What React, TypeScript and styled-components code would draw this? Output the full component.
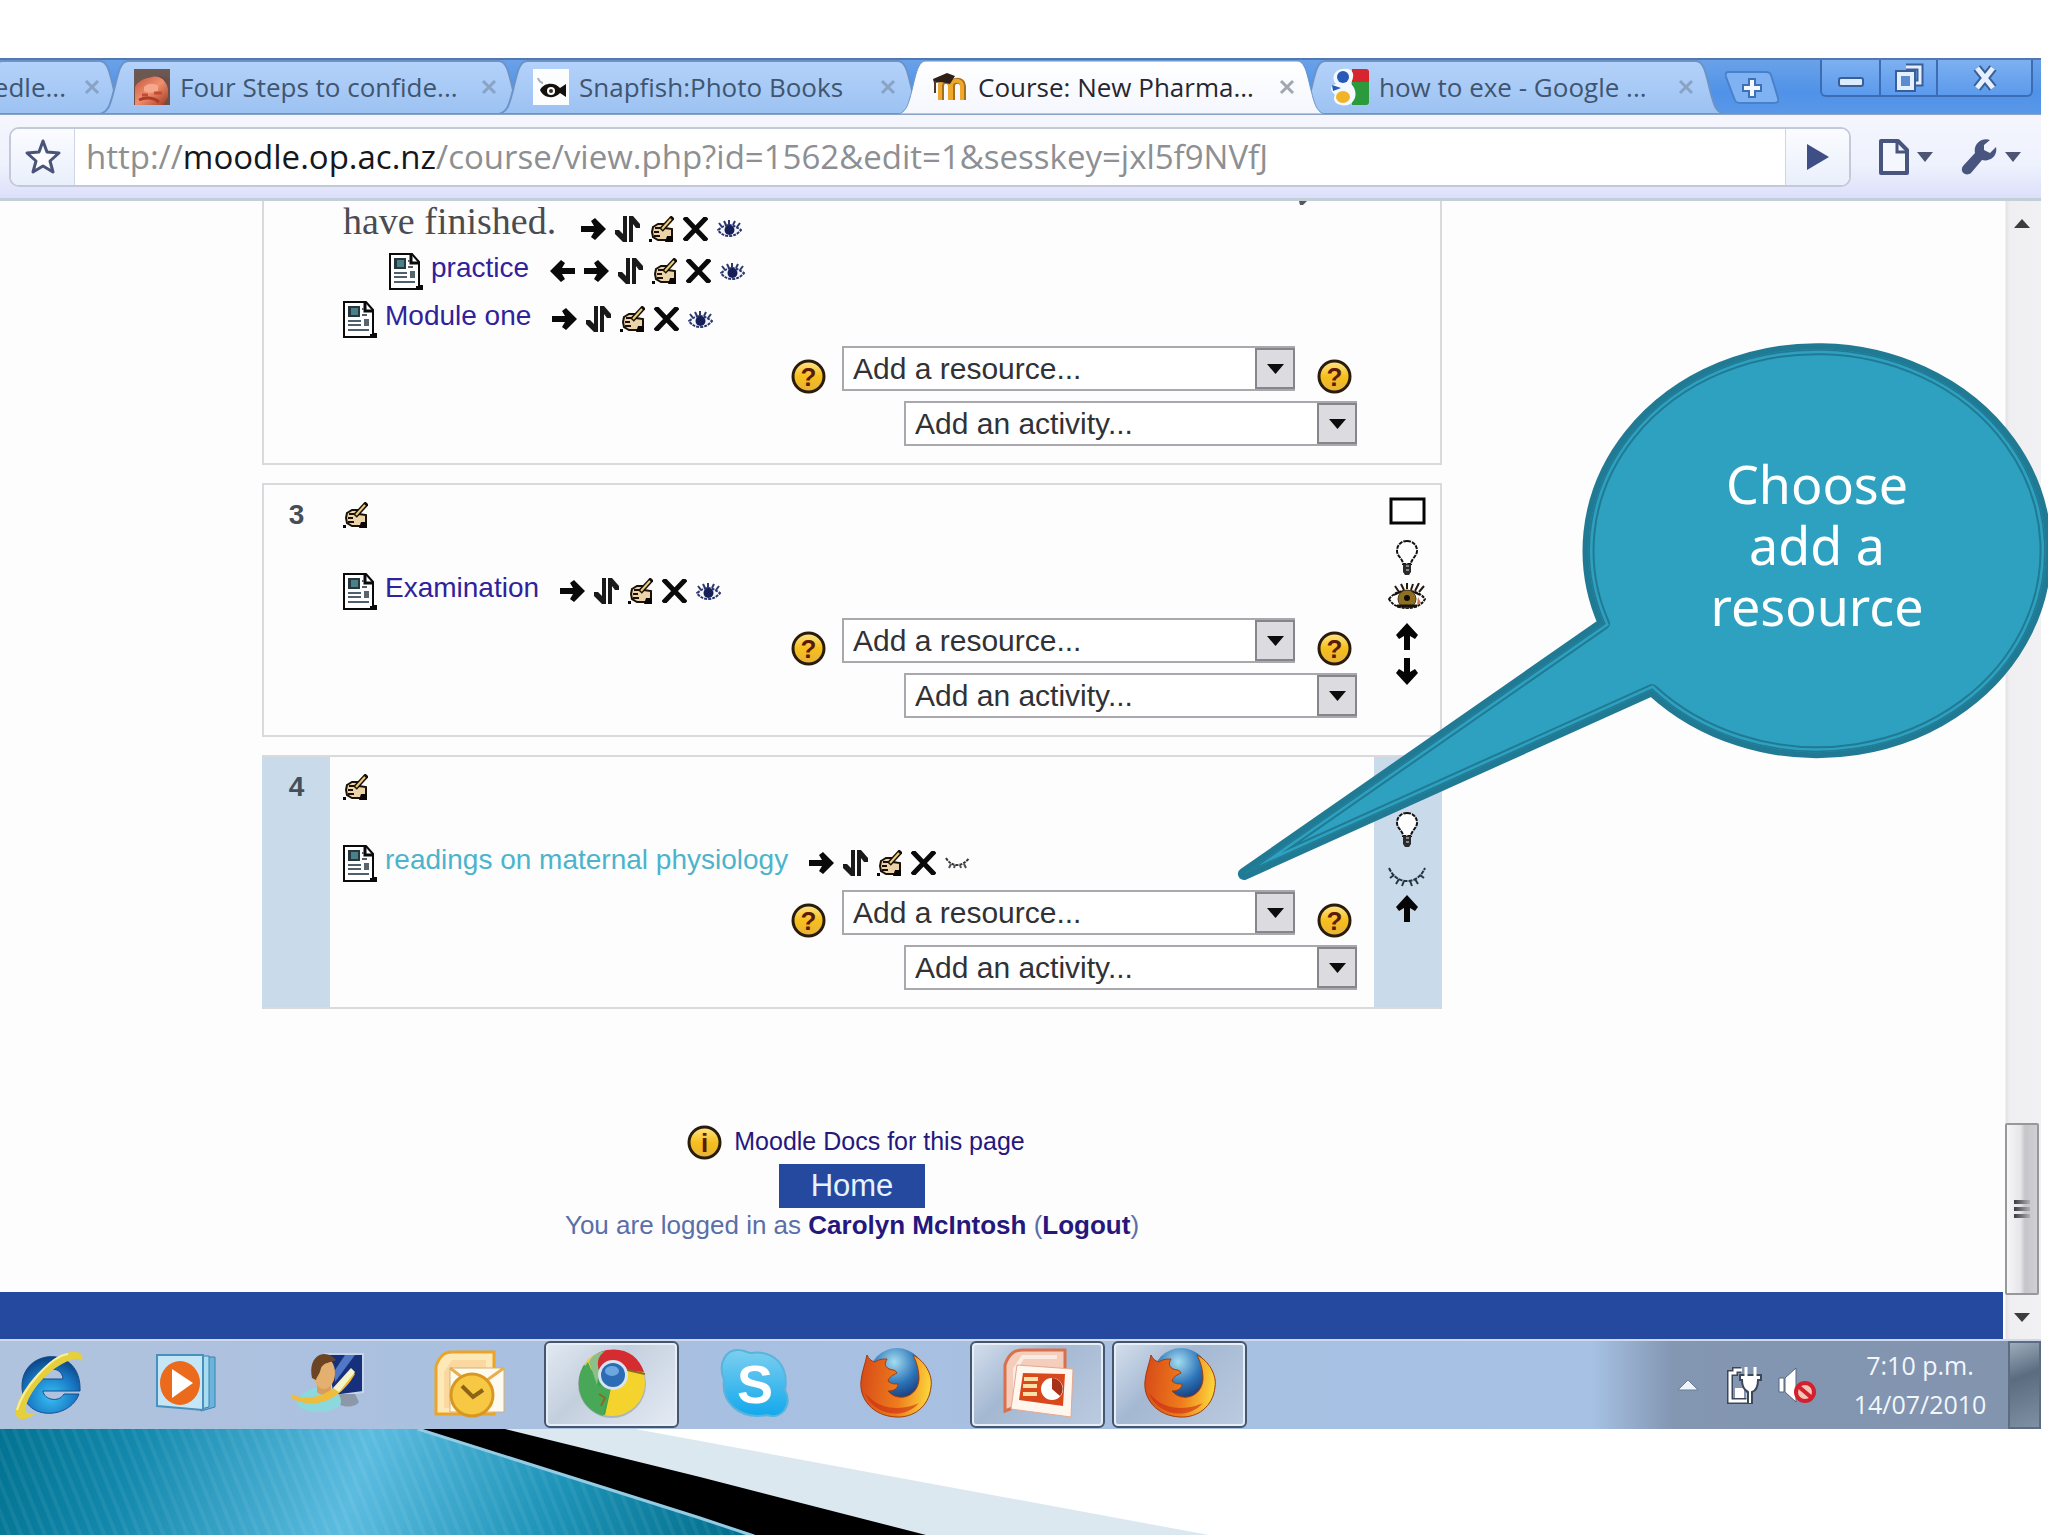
import React from "react";
import styled, { createGlobalStyle, css } from "styled-components";

const sans = `"Liberation Sans", Arial, sans-serif`;
const ui = `"Open Sans", "Noto Sans", sans-serif`;

const GlobalStyle = createGlobalStyle`
  *, *::before, *::after { box-sizing: border-box; }
  body { margin: 0; background: #fff; font-family: ${sans}; }
  button { margin: 0; padding: 0; border: 0; background: none; font: inherit; color: inherit; cursor: pointer; }
  a { text-decoration: none; }
  svg { display: block; flex: none; }
`;

/* ---------- course icons ---------- */

const EditIcon = () => (
  <svg width="25" height="26" viewBox="0 0 25 26" aria-hidden>
    <path d="M4 11l5-3h6l1 4 7 1v11H9l-5-3-1-5z" fill="#ecd4a8" stroke="#1a120a" strokeWidth="2" />
    <path d="M6 12h5M5 16h5M5 20h6" stroke="#1a120a" strokeWidth="2" />
    <path d="M18 20h6v6h-8z" fill="#0a0806" />
    <path d="M0 23h3v3H0z" fill="#0a0806" />
    <path d="M24 1L12 14" stroke="#140e08" strokeWidth="5" />
    <path d="M22 3l-9 10" stroke="#f0cc78" strokeWidth="2" />
  </svg>
);
const EyeIcon = () => (
  <svg width="25" height="17" viewBox="0 0 25 17" aria-hidden>
    <path d="M1 10Q7 5 12 5t12 5q-5 6-12 6T1 10z" fill="#f4f6fc" stroke="#2a3770" strokeWidth="2" strokeDasharray="3 1" />
    <circle cx="12.500" cy="10" r="5" fill="#141f58" />
    <path d="M12 0v5M7 1l2 4M18 1l-2 4M2 3l3 4M23 3l-3 4" stroke="#2a3770" strokeWidth="2" />
  </svg>
);
const EyeShutIcon = () => (
  <svg width="25" height="12" viewBox="0 0 25 12" aria-hidden>
    <path d="M1 1q4 7 11 7T24 1" fill="none" stroke="#33363a" strokeWidth="2" strokeDasharray="3 1" />
    <path d="M6 7l-2 4M10 8l-1 3M15 8l1 3M19 7l2 4" stroke="#4c5054" strokeWidth="2" />
  </svg>
);
const BigEyeIcon = () => (
  <svg width="38" height="26" viewBox="0 0 38 26" aria-hidden>
    <path d="M1 16q6-8 18-8t18 8q-5 9-18 9T1 16z" fill="#fff" stroke="#17120c" strokeWidth="2" strokeDasharray="3 1" />
    <path d="M6 12Q19 4 32 12" fill="none" stroke="#17120c" strokeWidth="2" />
    <circle cx="19" cy="16" r="9" fill="#8f6f22" stroke="#4e3a10" strokeWidth="1" />
    <circle cx="19" cy="15" r="3" fill="#120c04" />
    <path d="M9 23h20" stroke="#17120c" strokeWidth="3" />
    <path d="M30 14l3 6-4 2z" fill="#c47a5c" />
    <path d="M7 3l4 6M13 1l3 6M19 0v6M25 1l-2 6M31 0l-4 8M36 3l-5 6" stroke="#221a12" strokeWidth="2" />
  </svg>
);
const BigEyeShutIcon = () => (
  <svg width="38" height="20" viewBox="0 0 38 20" aria-hidden>
    <path d="M1 1q6 13 18 13T37 1" fill="none" stroke="#26343f" strokeWidth="2" strokeDasharray="4 1" />
    <path d="M6 8l-4 3M11 12l-3 5M16 14l-2 5M22 14l2 5M27 12l3 5M32 8l4 3" stroke="#26343f" strokeWidth="2" />
  </svg>
);
const BulbIcon = () => (
  <svg width="24" height="35" viewBox="0 0 24 35" aria-hidden>
    <path d="M12 1c6 0 10 4 10 10 0 5-6 8-6 13H8c0-5-6-8-6-13C2 5 6 1 12 1z" fill="#fff" stroke="#111" strokeWidth="2" strokeDasharray="4 1" />
    <path d="M8 24h8v8l-2 3h-4l-2-3z" fill="#2a2a2c" />
    <path d="M11 26h3M11 30h3" stroke="#e8e8e8" strokeWidth="1" />
  </svg>
);

const RightIcon = () => (
  <svg width="25" height="22" viewBox="0 0 25 22" aria-hidden>
    <path d="M0 8h13L10 3l4-3 11 11-11 11-4-3 3-5H0z" fill="#0a0a0a" />
  </svg>
);
const LeftIcon = () => (
  <svg width="25" height="22" viewBox="0 0 25 22" aria-hidden>
    <path d="M25 8H12l3-5-4-3L0 11l11 11 4-3-3-5h13z" fill="#0a0a0a" />
  </svg>
);
const MoveIcon = () => (
  <svg width="25" height="26" viewBox="0 0 25 26" aria-hidden>
    <path d="M8 0h4v26H8l-8-8v-4h4l4 4zM14 0h4l7 8v4h-4l-3-4v18h-4z" fill="#1a1a1a" />
  </svg>
);
const DeleteIcon = () => (
  <svg width="25" height="24" viewBox="0 0 25 24" aria-hidden>
    <path d="M3 2l19 20M22 2L3 22" stroke="#0a0a0a" strokeWidth="5" strokeLinecap="square" />
  </svg>
);
const UpIcon = () => (
  <svg width="22" height="27" viewBox="0 0 22 27" aria-hidden>
    <path d="M8 27V13l-5 3-3-4L11 0l11 12-3 4-5-3v14z" fill="#050505" />
  </svg>
);
const DownIcon = () => (
  <svg width="22" height="27" viewBox="0 0 22 27" aria-hidden>
    <path d="M8 0v14l-5-3-3 4 11 12 11-12-3-4-5 3V0z" fill="#050505" />
  </svg>
);
const SquareIcon = () => (
  <svg width="37" height="28" viewBox="0 0 37 28" aria-hidden>
    <rect x="2" y="2" width="33" height="24" fill="#fff" stroke="#050505" strokeWidth="3" />
  </svg>
);
const DocIcon = () => (
  <svg width="34" height="37" viewBox="0 0 34 37" aria-hidden>
    <path d="M1 1h22l7 8v24h3v3H1z" fill="#fff" stroke="#0a0a0a" strokeWidth="2" />
    <path d="M22 1v9h8" fill="none" stroke="#0a0a0a" strokeWidth="3" />
    <rect x="5" y="5" width="12" height="11" fill="#26383f" />
    <rect x="8" y="7" width="7" height="7" fill="#4c7f88" />
    <path d="M19 8h2M19 14h5M5 20h13M5 24h13M5 29h21" stroke="#50606a" strokeWidth="2" />
    <rect x="21" y="18" width="5" height="7" fill="#56666e" />
    <path d="M27 35h7" stroke="#0a0a0a" strokeWidth="4" />
  </svg>
);
const CoinIcon = ({ mark }: { mark: string }) => (
  <svg width="35" height="35" viewBox="0 0 35 35" aria-hidden>
    <defs>
      <linearGradient id="coin" x1="0" y1="0" x2="0" y2="1">
        <stop offset="0" stopColor="#ffe58a" />
        <stop offset=".5" stopColor="#f6bf1c" />
        <stop offset="1" stopColor="#e6b03a" />
      </linearGradient>
    </defs>
    <circle cx="17.5" cy="17.5" r="15.5" fill="url(#coin)" stroke="#2a1c0c" strokeWidth="3" />
    <text x="17.5" y="27" textAnchor="middle" fontFamily="Liberation Sans, sans-serif" fontWeight="700" fontSize="26" fill="#5c1a0c">
      {mark}
    </text>
  </svg>
);

/* ---------- favicons ---------- */

const FaceFavicon = () => (
  <svg width="36" height="36" viewBox="0 0 36 36" aria-hidden>
    <defs>
      <linearGradient id="face" x1="0" y1="0" x2="1" y2="1">
        <stop offset="0" stopColor="#c4553e" />
        <stop offset=".5" stopColor="#f09070" />
        <stop offset="1" stopColor="#a03820" />
      </linearGradient>
    </defs>
    <rect width="36" height="36" fill="#6c5048" />
    <path d="M1 36V18C5 8 12 10 18 8s14 2 16 12v8l-5 8z" fill="url(#face)" />
    <path d="M0 0h36v10C26 4 10 6 0 18z" fill="#6c5850" />
    <path d="M10 18c4-4 10-4 14-1v5c-5 2-10 2-14 0z" fill="#f6a88c" />
    <path d="M8 26h6M20 24h8" stroke="#c24c30" strokeWidth="3" />
    <path d="M5 31c6-3 14-3 20 2" stroke="#b03c28" strokeWidth="3" fill="none" />
  </svg>
);
const FishFavicon = () => (
  <svg width="36" height="36" viewBox="0 0 36 36" aria-hidden>
    <rect width="36" height="36" fill="#fbfdff" />
    <path d="M5 9q1 4 5 5" stroke="#a8b0b8" strokeWidth="2" fill="none" />
    <path d="M7 21c4-8 15-8 20-2l6-4v13l-6-4c-5 6-16 6-20-3z" fill="#14100e" />
    <circle cx="18" cy="22" r="4" fill="#fff" />
    <circle cx="18" cy="22" r="2" fill="#3a3028" />
  </svg>
);
const MoodleFavicon = () => (
  <svg width="36" height="36" viewBox="0 0 36 36" aria-hidden>
    <g fill="none" strokeWidth="6">
      <path d="M9 31V17c0-7 10-7 10 0v14M20 31V17c0-7 11-7 11 0v14" stroke="#a5701a" />
      <path d="M8 31V17c0-7 10-7 10 0v14M19 31V17c0-7 11-7 11 0v14" stroke="#f0a82c" strokeWidth="4" />
    </g>
    <path d="M1 10l14-6 8 3-5 8-9-2-7 1z" fill="#2e2018" />
    <path d="M3 12v12" stroke="#4a3a2c" strokeWidth="2" />
  </svg>
);
const GoogleFavicon = () => (
  <svg width="38" height="38" viewBox="0 0 38 38" aria-hidden>
    <path d="M21 1h14a3 3 0 013 3v11H21z" fill="#d8242c" />
    <path d="M21 14h17v20a3 3 0 01-3 3H21z" fill="#2a9a3c" />
    <path d="M6 3C12-1 24 0 22 9c0 4-3 5-2 7 6 5 7 17-3 21C8 39 0 34 4 27c-6-6-5-9 1-11C1 12 2 6 6 3z" fill="#f4f8ff" />
    <ellipse cx="12" cy="9" rx="6" ry="6" fill="#2858b8" />
    <ellipse cx="12" cy="29" rx="7" ry="6" fill="#f0b428" />
    <path d="M1 17l9 3-8 3z" fill="#2858b8" />
  </svg>
);

/* ---------- browser window ---------- */

const Slide = styled.div`
  position: relative;
  display: flex;
  flex-direction: column;
  min-height: 100vh;
  padding-top: 58px;
  overflow: hidden;
  background: #fff;
`;

const Window = styled.div`
  display: flex;
  flex-direction: column;
  margin-right: 7px;
`;

const TitleBar = styled.header`
  display: flex;
  align-items: flex-start;
  justify-content: space-between;
  height: 56px;
  overflow: hidden;
  background: linear-gradient(#6aa2e8, #4f92e8 60%, #5a98e8);
  border-top: 2px solid #5078b4;
`;

const TabStrip = styled.nav`
  display: flex;
  align-items: flex-start;
  height: 54px;
  margin-left: -26px;
`;

const TabBox = styled.div<{ $active?: boolean; $cut?: boolean }>`
  position: relative;
  z-index: ${(p) => (p.$active ? 2 : 1)};
  display: flex;
  align-items: center;
  justify-content: ${(p) => (p.$cut ? "flex-end" : "flex-start")};
  gap: 10px;
  width: ${(p) => (p.$cut ? 154 : 427)}px;
  height: 54px;
  padding: 0 28px 0 34px;
  margin-right: -28px;
  flex: none;
`;

const TabShape = styled.svg`
  position: absolute;
  inset: 0;
  width: 100%;
  height: 100%;
  z-index: -1;
`;

const TabTitle = styled.a<{ $active?: boolean; $cut?: boolean }>`
  flex: ${(p) => (p.$cut ? "none" : "1")};
  font: 26px/36px ${ui};
  white-space: nowrap;
  color: ${(p) => (p.$active ? "#26282e" : "#40556f")};
`;

const TabClose = styled.button`
  width: 20px;
  height: 20px;
  margin-left: 8px;
  display: grid;
  place-items: center;
`;

function Tab({ title, icon, active, cut }: { title: string; icon?: React.ReactNode; active?: boolean; cut?: boolean }) {
  const w = cut ? 154 : 427;
  return (
    <TabBox $active={active} $cut={cut}>
      <TabShape viewBox={`0 0 ${w} 54`} aria-hidden>
        <defs>
          <linearGradient id="tabIdle" x1="0" y1="0" x2="0" y2="1">
            <stop offset="0" stopColor="#b4d2fa" />
            <stop offset="1" stopColor="#9cc2f2" />
          </linearGradient>
          <linearGradient id="tabActive" x1="0" y1="0" x2="0" y2="1">
            <stop offset="0" stopColor="#ffffff" />
            <stop offset="1" stopColor="#f5f7fe" />
          </linearGradient>
        </defs>
        <path
          d={`M0 54C8 52 10 46 14 30S20 1 28 1H${w - 28}C${w - 20} 1 ${w - 18} 14 ${w - 14} 30S${w - 8} 52 ${w} 54z`}
          fill={active ? "url(#tabActive)" : "url(#tabIdle)"}
          stroke="#6b93c8"
          strokeWidth={active ? 1 : 2}
        />
      </TabShape>
      {icon}
      <TabTitle href="#" $active={active} $cut={cut}>
        {title}
      </TabTitle>
      <TabClose aria-label="Close tab">
        <svg width="16" height="16" viewBox="0 0 16 16" aria-hidden>
          <path d="M2 2l12 12M14 2L2 14" stroke={active ? "#a2a6ae" : "#8aa2c4"} strokeWidth="3" />
        </svg>
      </TabClose>
    </TabBox>
  );
}

const NewTab = styled.button`
  margin: 11px 0 0 29px;
`;

const WindowButtons = styled.div`
  display: flex;
  height: 37px;
  margin-right: 8px;
  border: 2px solid #3c6cb4;
  border-top: 0;
  border-radius: 0 0 6px 6px;
  background: linear-gradient(#7db0f0, #5b9aec);
`;

const WindowButton = styled.button<{ $wide?: boolean }>`
  display: grid;
  place-items: center;
  width: ${(p) => (p.$wide ? 95 : 57)}px;
  & + & {
    border-left: 2px solid #3c6cb4;
  }
`;

const Toolbar = styled.div`
  display: flex;
  align-items: center;
  height: 87px;
  padding: 0 20px 0 9px;
  background: linear-gradient(#f5f6fd, #eef2fd 60%, #dcdffa);
  border-top: 1px solid #8aa4c8;
  border-bottom: 3px solid #c2ced8;
`;

const AddressBar = styled.form`
  display: flex;
  flex: 1;
  height: 60px;
  border: 2px solid #c3c9d8;
  border-radius: 10px;
  background: #fff;
  overflow: hidden;
`;

const AddressButton = styled.button<{ $side: "left" | "right" }>`
  display: grid;
  place-items: center;
  width: 64px;
  background: linear-gradient(#fbfcff, #e9effb);
  ${(p) =>
    p.$side === "left"
      ? css`
          border-right: 1px solid #ced6e4;
        `
      : css`
          border-left: 1px solid #ced6e4;
        `}
`;

const AddressText = styled.a`
  flex: 1;
  padding: 0 11px;
  font: 33px/56px ${ui};
  color: #8d8f92;
  white-space: nowrap;
  overflow: hidden;
  strong {
    font-weight: 400;
    color: #15171a;
  }
`;

const ToolButton = styled.button`
  display: flex;
  align-items: center;
  gap: 8px;
  margin-left: 28px;
`;

const Caret = () => (
  <svg width="16" height="10" viewBox="0 0 16 10" aria-hidden>
    <path d="M0 0h16L8 10z" fill="#4c5672" />
  </svg>
);

/* ---------- page ---------- */

const Viewport = styled.div`
  display: flex;
  background: #fdfdfe;
`;

const Page = styled.main`
  flex: 1;
  min-width: 0;
  display: flex;
  flex-direction: column;
`;

const Column = styled.div`
  width: 100%;
  max-width: 1442px;
  padding-left: 262px;
  display: flex;
  flex-direction: column;
  gap: 18px;
`;

const Topic = styled.section<{ $current?: boolean; $open?: boolean }>`
  display: grid;
  grid-template-columns: 66px 1fr 66px;
  border: 2px solid #d9d9de;
  ${(p) =>
    p.$open &&
    css`
      border-top: 0;
    `}
  ${(p) =>
    p.$current &&
    css`
      border-left-color: #c9daea;
      border-right-color: #c9daea;
    `}
`;

const TopicSide = styled.div<{ $current?: boolean }>`
  display: flex;
  flex-direction: column;
  align-items: center;
  gap: 8px;
  padding-top: 12px;
  background: ${(p) => (p.$current ? "#c9daea" : "transparent")};
`;

const TopicNumber = styled.h2`
  margin: 0;
  padding-right: 1px;
  font: 700 28px/36px ${sans};
  color: #454f58;
`;

const SideSlot = styled.button<{ $h: number; $end?: boolean }>`
  display: flex;
  align-items: ${(p) => (p.$end ? "flex-end" : "flex-start")};
  height: ${(p) => p.$h}px;
`;

const TopicBody = styled.div<{ $open?: boolean }>`
  padding: ${(p) => (p.$open ? 0 : 16)}px 17px 17px 13px;
`;

const TopicEdit = styled.button`
  display: block;
  height: 27px;
  margin-bottom: 44px;
`;

const CutLine = styled.div`
  display: flex;
  justify-content: flex-end;
  height: 4px;
  padding-right: 50px;
`;

const Rows = styled.ul`
  display: flex;
  flex-direction: column;
  gap: 10px;
  margin: 0 0 8px;
  padding: 0;
  list-style: none;
`;

const Row = styled.li<{ $indent?: boolean }>`
  display: flex;
  align-items: center;
  height: 38px;
  padding-left: ${(p) => (p.$indent ? 46 : 0)}px;
`;

const LeadRow = styled.div`
  display: flex;
  align-items: center;
  height: 47px;
`;

const LeadText = styled.p`
  align-self: flex-start;
  margin: 0 4px 0 0;
  font: 38px/32px "Liberation Serif", serif;
  color: #4a4c50;
`;

const RowLink = styled.a<{ $dim?: boolean }>`
  align-self: flex-start;
  margin-left: 8px;
  font: 28px/32px ${sans};
  white-space: nowrap;
  color: ${(p) => (p.$dim ? "#4bb4cc" : "#2f229a")};
`;

const Actions = styled.span`
  display: flex;
  align-items: center;
  gap: 9px;
  margin-left: 21px;
`;

const icons = {
  left: ["Move left", <LeftIcon key="l" />],
  right: ["Move right", <RightIcon key="r" />],
  move: ["Move", <MoveIcon key="m" />],
  edit: ["Update", <EditIcon key="e" />],
  remove: ["Delete", <DeleteIcon key="d" />],
  hide: ["Hide", <EyeIcon key="h" />],
  show: ["Show", <EyeShutIcon key="s" />],
} as const;

function ActionBar({ items }: { items: (keyof typeof icons)[] }) {
  return (
    <Actions>
      {items.map((name) => (
        <button key={name} aria-label={icons[name][0]}>
          {icons[name][1]}
        </button>
      ))}
    </Actions>
  );
}

const AddForm = styled.form`
  display: flex;
  flex-direction: column;
  align-items: flex-end;
  gap: 10px;
`;

const AddLine = styled.div`
  display: flex;
  align-items: flex-end;
  gap: 16px;
`;

const HelpButton = styled.button<{ $last?: boolean }>`
  height: 35px;
  margin: 0 ${(p) => (p.$last ? 5 : 0)}px -3px ${(p) => (p.$last ? 6 : 0)}px;
`;

const SelectBox = styled.div`
  position: relative;
  width: 453px;
  height: 45px;
`;

const Select = styled.select`
  appearance: none;
  width: 100%;
  height: 100%;
  padding: 0 44px 0 9px;
  border: 2px solid #a8a8ae;
  border-radius: 0;
  background: #fff;
  font: 30px/36px ${sans};
  color: #303236;
`;

const SelectArrow = styled.span`
  position: absolute;
  top: 2px;
  right: 0;
  bottom: 2px;
  width: 40px;
  display: grid;
  place-items: center;
  border: 2px solid #85858b;
  background: #dcdce0;
  pointer-events: none;
`;

function Dropdown({ label }: { label: string }) {
  return (
    <SelectBox>
      <Select aria-label={label}>
        <option>{label}</option>
      </Select>
      <SelectArrow>
        <svg width="17" height="10" viewBox="0 0 17 10" aria-hidden>
          <path d="M0 0h17L8.500 10z" fill="#0c0c0c" />
        </svg>
      </SelectArrow>
    </SelectBox>
  );
}

function AddControls() {
  return (
    <AddForm>
      <AddLine>
        <HelpButton type="button" aria-label="Help with resources">
          <CoinIcon mark="?" />
        </HelpButton>
        <Dropdown label="Add a resource..." />
        <HelpButton type="button" $last aria-label="Help with activities">
          <CoinIcon mark="?" />
        </HelpButton>
      </AddLine>
      <Dropdown label="Add an activity..." />
    </AddForm>
  );
}

const PageFooter = styled.footer`
  display: flex;
  flex-direction: column;
  align-items: center;
  padding: 98px 0 50px;
  font: 26px/34px ${sans};
  color: #5a6ea8;
  a {
    color: #26177c;
  }
`;

const DocsLink = styled.a`
  display: flex;
  align-items: flex-start;
  gap: 12px;
  padding-left: 8px;
  height: 39px;
  font-size: 25px;
  line-height: 32px;
`;

const HomeButton = styled.a`
  padding: 0 32px;
  background: #24499f;
  font-size: 31px;
  line-height: 44px;
  && {
    color: #e8f2ff;
  }
`;

const LoginLine = styled.p`
  margin: 0;
  a {
    font-weight: 700;
  }
`;

const BlueBar = styled.div`
  height: 47px;
  background: #24499f;
`;

const ScrollBar = styled.div`
  display: flex;
  flex-direction: column;
  align-items: center;
  width: 38px;
  background: linear-gradient(90deg, #fdfdfe 2px, #e4e2e6 3px, #efeef0 7px, #f1f0f2);
`;

const ScrollButton = styled.button`
  width: 34px;
  height: 44px;
  display: grid;
  place-items: center;
`;

const ScrollThumb = styled.button`
  display: flex;
  flex-direction: column;
  align-items: center;
  justify-content: center;
  gap: 3px;
  width: 34px;
  height: 172px;
  margin-top: auto;
  border: 2px solid #98989c;
  border-radius: 2px;
  background: linear-gradient(90deg, #f6f6f7, #e6e5e8 45%, #c6c5ca 60%, #d0cfd4);
`;

const Grip = styled.span`
  width: 16px;
  height: 4px;
  background: linear-gradient(90deg, #3c3c40, #b0b0b4);
`;

/* ---------- taskbar ---------- */

const TaskBar = styled.footer`
  display: flex;
  align-items: stretch;
  justify-content: space-between;
  height: 90px;
  overflow: hidden;
  border-top: 2px solid #d0dae8;
  background: linear-gradient(90deg, #b0c3de, #a8bfe0 30%, #a6c1e4 78%, #8396b2 82%, #8294ae);
`;

const TaskList = styled.div`
  display: flex;
  gap: 7px;
  margin-left: -24px;
`;

const Task = styled.button<{ $open?: boolean; $front?: boolean }>`
  display: grid;
  place-items: center;
  width: 135px;
  height: 87px;
  flex: none;
  padding-bottom: 4px;
  ${(p) =>
    p.$open &&
    css`
      border: 2px solid #46566e;
      border-radius: 6px;
      box-shadow: inset 0 0 0 2px #e6eef8;
      background: ${p.$front
        ? "linear-gradient(135deg, #e2e9f1, #c4cfde 40%, #e4ebf4)"
        : "linear-gradient(135deg, #d4dfed, #a4b8d2 40%, #bccbe0)"};
    `}
`;

const Tray = styled.div`
  display: flex;
  align-items: center;
`;

const TrayButton = styled.button`
  margin-right: 16px;
`;

const Clock = styled.time`
  width: 176px;
  font: 25px/39px ${ui};
  text-align: center;
  color: #f2f7fd;
  white-space: pre-line;
`;

const ShowDesktop = styled.button`
  align-self: stretch;
  width: 33px;
  border: 2px solid #5c6c82;
  background: linear-gradient(160deg, #9cacbc, #5b6c80 40%, #8090a4);
`;

const IEIcon = () => (
  <svg width="84" height="74" viewBox="0 0 84 74" aria-hidden>
    <defs>
      <radialGradient id="ie" cx=".5" cy=".7" r=".7">
        <stop offset="0" stopColor="#38c0f4" />
        <stop offset=".6" stopColor="#1878c4" />
        <stop offset="1" stopColor="#0c4080" />
      </radialGradient>
    </defs>
    <path d="M78 45H41c1 9 16 12 21 3h15C68 74 20 76 20 40 20 2 80 -2 78 45zM41 33h20c-1-13-19-13-20 0z" fill="url(#ie)" stroke="#14508c" strokeWidth="1" />
    <path d="M80 16C84 2 64 2 46 18 22 38 8 66 16 72c4 3 12 0 18-5-8 2-12 0-10-7 4-14 18-32 36-42 10-5 18-7 20-2z" fill="#e6cf3c" />
    <path d="M66 8C50 10 22 40 15 64" stroke="#f8efa0" strokeWidth="2" fill="none" />
  </svg>
);
const MediaIcon = () => (
  <svg width="62" height="60" viewBox="0 0 62 60" aria-hidden>
    <path d="M20 4h40v50l-14 4z" fill="#6cb4dc" stroke="#3c80b0" />
    <path d="M12 3h42v51l-12 3z" fill="#a8dcf0" stroke="#3c80b0" />
    <path d="M2 2h46v55L2 53z" fill="#c4e6f6" stroke="#4a90bc" strokeWidth="2" />
    <ellipse cx="25" cy="30" rx="20" ry="22" fill="#ec6a1c" />
    <path d="M17 16l21 14-21 15z" fill="#fff" />
  </svg>
);
const PersonIcon = () => (
  <svg width="78" height="62" viewBox="0 0 78 62" aria-hidden>
    <path d="M36 2h38v38l-30 4z" fill="#16307c" stroke="#c8d4e8" strokeWidth="2" />
    <path d="M56 3h10L46 30V18z" fill="#5078c4" />
    <path d="M50 42h16l4 8c-4 6-18 6-22 0z" fill="#8c98a8" />
    <path d="M8 52c2-20 44-24 44-2 0 12-38 14-44 2z" fill="#8cd8dc" />
    <path d="M28 30h14v10c-4 4-10 4-14 0z" fill="#d89c5c" />
    <ellipse cx="35" cy="21" rx="11" ry="16" fill="#e4b070" />
    <path d="M23 26C18 2 38-4 47 8c-6 3-12 2-15 8-1 6-4 8-5 12z" fill="#6c4424" />
    <path d="M2 42c16 8 40 4 60-24l4 4C50 50 24 58 2 46z" fill="#f0bc3c" />
    <path d="M44 36l18-20 4 4-16 20z" fill="#f4f4c8" />
  </svg>
);
const OutlookIcon = () => (
  <svg width="76" height="70" viewBox="0 0 76 70" aria-hidden>
    <path d="M4 66V18C8 8 12 4 20 4h42v62z" fill="#fde8b8" stroke="#eca428" strokeWidth="3" />
    <path d="M12 60V24l8-12h34v48z" fill="#fbd8a0" />
    <path d="M18 20h54v44H18z" fill="#fffaf0" stroke="#d8b070" />
    <path d="M18 20l26 20 28-20" fill="none" stroke="#e8b04c" strokeWidth="3" />
    <circle cx="40" cy="47" r="21" fill="#f6c844" stroke="#d89820" strokeWidth="3" />
    <path d="M30 38l11 11 10-7" fill="none" stroke="#8c6414" strokeWidth="4" />
  </svg>
);
const ChromeIcon = () => (
  <svg width="70" height="70" viewBox="0 0 70 70" aria-hidden>
    <circle cx="35" cy="36" r="34" fill="#6c7c74" opacity=".4" />
    <circle cx="35" cy="35" r="33" fill="#f4d42c" />
    <path d="M35 35L7 17A33 33 0 0028 67z" fill="#3ca04c" />
    <path d="M35 35L26 68A33 33 0 015 22l6-8 10 24z" fill="#48a858" />
    <path d="M18 22C14 8 20 4 30 2 48-1 62 8 67 24L40 22z" fill="#d42c30" />
    <path d="M12 14c4-8 10-10 16-11-8 6-8 12-6 20l-2 14z" fill="#8cc088" />
    <path d="M22 46l6 4-4 8M50 22l18 4" fill="none" stroke="#8c6c1c" strokeWidth="2" />
    <circle cx="36" cy="27" r="15" fill="#d8e4f0" />
    <circle cx="36" cy="27" r="12" fill="#2c6cb4" />
    <ellipse cx="35" cy="23" rx="7" ry="5" fill="#6ca8e0" />
  </svg>
);
const SkypeIcon = () => (
  <svg width="70" height="70" viewBox="0 0 70 70" aria-hidden>
    <defs>
      <linearGradient id="sky" x1="0" y1="0" x2="0" y2="1">
        <stop offset="0" stopColor="#7ccff0" />
        <stop offset="1" stopColor="#12a8ec" />
      </linearGradient>
    </defs>
    <path d="M20 2c6 0 8 3 12 3C56 2 70 18 66 42c8 16-4 30-18 25C20 72 2 54 5 32-2 14 8 1 20 2z" fill="url(#sky)" stroke="#58b4dc" strokeWidth="2" />
    <text x="36" y="55" textAnchor="middle" fontFamily="Liberation Sans, sans-serif" fontWeight="700" fontSize="54" fill="#fff">
      S
    </text>
  </svg>
);
const FirefoxIcon = () => (
  <svg width="74" height="72" viewBox="0 0 74 72" aria-hidden>
    <defs>
      <radialGradient id="globe" cx=".45" cy=".25" r=".8">
        <stop offset="0" stopColor="#a4dcf0" />
        <stop offset=".5" stopColor="#2c74b8" />
        <stop offset="1" stopColor="#10205c" />
      </radialGradient>
      <linearGradient id="fox" x1="0" y1=".4" x2="1" y2=".5">
        <stop offset="0" stopColor="#d84c18" />
        <stop offset=".55" stopColor="#ee7c1c" />
        <stop offset="1" stopColor="#fcd83c" />
      </linearGradient>
    </defs>
    <ellipse cx="38" cy="29" rx="28" ry="28" fill="url(#globe)" />
    <path d="M8 8c2 4 4 6 8 7 4-3 8-3 12-3-2 4-3 7 2 10 4 1 7 1 8 4-4 2-8 4-9 8 3 3 6 3 10 3 0 5-5 7-10 7 10 12 30 6 31-12 0-10-3-18-6-24 12 6 20 20 18 32C70 60 54 71 37 70 14 69 0 52 2 34 3 24 6 18 8 8z" fill="url(#fox)" stroke="#a03c10" strokeWidth="1" />
    <path d="M6 46c8 22 38 28 54 10-12 6-38 10-54-10z" fill="#c82c14" opacity=".6" />
  </svg>
);
const PowerPointIcon = () => (
  <svg width="74" height="72" viewBox="0 0 74 72" aria-hidden>
    <path d="M4 64V18C8 6 14 3 22 3h42v40L14 60z" fill="#f4cdbc" stroke="#d8704c" strokeWidth="3" />
    <path d="M14 54V22l8-12h34" fill="none" stroke="#fbeae2" strokeWidth="4" />
    <path d="M16 18l56 4-2 48-60-8z" fill="#fff6ee" stroke="#e4a890" />
    <path d="M22 26l42 1-2 32-44-6z" fill="#d8481c" />
    <path d="M23 32h14M22 39h14M22 47h14" stroke="#fbe0a8" strokeWidth="4" />
    <circle cx="51" cy="42" r="11" fill="#fff" />
    <path d="M51 42V31a11 11 0 018 18z" fill="#a83018" />
  </svg>
);

/* ---------- slide artwork ---------- */

const SwooshBox = styled.div`
  flex: 1;
  min-height: 106px;
  overflow: hidden;
`;

const Swoosh = () => (
  <SwooshBox>
    <svg width="1240" height="106" viewBox="0 0 1240 106" aria-hidden>
      <defs>
        <linearGradient id="teal" gradientUnits="userSpaceOnUse" x1="-20" y1="0" x2="700" y2="210">
          <stop offset="0" stopColor="#00708e" />
          <stop offset=".2" stopColor="#1288ac" />
          <stop offset=".5" stopColor="#5cbce0" />
          <stop offset=".76" stopColor="#1e94b8" />
          <stop offset="1" stopColor="#04708e" />
        </linearGradient>
        <pattern id="stripe" width="11" height="11" patternUnits="userSpaceOnUse" patternTransform="rotate(-22)">
          <rect width="4" height="11" fill="#fff" opacity=".06" />
        </pattern>
      </defs>
      <path d="M490 0h145l574 106H900z" fill="#dbe8f0" />
      <path d="M415 0h90l195 48 226 58H750z" fill="#000" />
      <path d="M0 0h420l280 88 55 18H0z" fill="url(#teal)" />
      <path d="M0 0h420l280 88 55 18H0z" fill="url(#stripe)" />
      <path d="M418 0l282 89 54 18" fill="none" stroke="#94cce4" strokeWidth="3" />
    </svg>
  </SwooshBox>
);

const Callout = styled.aside`
  position: absolute;
  z-index: 5;
  top: 342px;
  right: -4px;
  width: 820px;
`;

const CalloutText = styled.p`
  position: absolute;
  top: 0;
  right: 0;
  display: grid;
  place-items: center;
  width: 470px;
  height: 416px;
  margin: 0;
  padding-bottom: 12px;
  font: 52px/61px "Noto Sans", sans-serif;
  text-align: center;
  white-space: pre-line;
  color: #fff;
`;

const bubble = "M372 281.500A228.500 201.500 0 1 1 420 348L12 532z";

export default function App() {
  return (
    <>
      <GlobalStyle />
      <Slide>
        <Window>
          <TitleBar>
            <TabStrip aria-label="Tabs">
              <Tab cut title="edle..." />
              <Tab title="Four Steps to confide..." icon={<FaceFavicon />} />
              <Tab title="Snapfish:Photo Books" icon={<FishFavicon />} />
              <Tab active title="Course: New Pharma..." icon={<MoodleFavicon />} />
              <Tab title="how to exe - Google ..." icon={<GoogleFavicon />} />
              <NewTab aria-label="New tab">
                <svg width="54" height="33" viewBox="0 0 54 33" aria-hidden>
                  <path d="M3 1h38c4 0 5 2 6 6l6 20c1 3 0 5-4 5H15c-4 0-5-2-6-5L1 6c-1-3 0-5 2-5z" fill="#7fb2f2" stroke="#4a80c8" strokeWidth="2" />
                  <path d="M27 7v20M17 17h20" stroke="#3f6fb4" strokeWidth="8" />
                  <path d="M27 9v16M19 17h16" stroke="#f2f8ff" strokeWidth="4" />
                </svg>
              </NewTab>
            </TabStrip>
            <WindowButtons>
              <WindowButton aria-label="Minimise">
                <svg width="28" height="28" viewBox="0 0 28 28" aria-hidden>
                  <rect x="2" y="14" width="24" height="8" rx="2" fill="#dcecff" stroke="#3a5f98" strokeWidth="2" />
                </svg>
              </WindowButton>
              <WindowButton aria-label="Restore">
                <svg width="30" height="30" viewBox="0 0 30 30" aria-hidden>
                  <g fill="none">
                    <path d="M12 4h14v16h-4" stroke="#3a5f98" strokeWidth="7" />
                    <path d="M12 4h14v16h-4" stroke="#e4f0ff" strokeWidth="3" />
                    <rect x="5" y="11" width="13" height="14" stroke="#3a5f98" strokeWidth="8" />
                    <rect x="5" y="11" width="13" height="14" fill="#5b8cd0" stroke="#e4f0ff" strokeWidth="4" />
                  </g>
                </svg>
              </WindowButton>
              <WindowButton $wide aria-label="Close">
                <svg width="26" height="26" viewBox="0 0 26 26" aria-hidden>
                  <path d="M5 3l16 20M21 3L5 23" stroke="#3a5f98" strokeWidth="9" />
                  <path d="M5 3l16 20M21 3L5 23" stroke="#e4f0ff" strokeWidth="5" />
                </svg>
              </WindowButton>
            </WindowButtons>
          </TitleBar>

          <Toolbar>
            <AddressBar>
              <AddressButton type="button" $side="left" aria-label="Bookmark this page">
                <svg width="38" height="37" viewBox="0 0 38 37" aria-hidden>
                  <path d="M19 3l4 11 12 1-9 8 3 11-10-6-10 6 3-11-9-8 12-1z" fill="#fdfdff" stroke="#4a5478" strokeWidth="3" strokeLinejoin="round" />
                </svg>
              </AddressButton>
              <AddressText href="#">
                http://<strong>moodle.op.ac.nz</strong>/course/view.php?id=1562&amp;edit=1&amp;sesskey=jxl5f9NVfJ
              </AddressText>
              <AddressButton type="button" $side="right" aria-label="Go">
                <svg width="22" height="26" viewBox="0 0 22 26" aria-hidden>
                  <path d="M0 0l22 13L0 26z" fill="#3e4f86" />
                </svg>
              </AddressButton>
            </AddressBar>
            <ToolButton aria-label="Page menu">
              <svg width="30" height="36" viewBox="0 0 30 36" aria-hidden>
                <path d="M2 2h17l9 9v23H2z" fill="#f4f7fe" stroke="#47557f" strokeWidth="4" strokeLinejoin="round" />
                <path d="M18 2v11h10" fill="none" stroke="#47557f" strokeWidth="3" />
              </svg>
              <Caret />
            </ToolButton>
            <ToolButton aria-label="Settings">
              <svg width="36" height="36" viewBox="0 0 36 36" aria-hidden>
                <path d="M29 1c-8-3-17 4-15 13L2 27c-4 6 3 11 8 7l11-13c8 2 16-4 14-13l-6 6-6-3 0-5z" fill="#47557f" />
              </svg>
              <Caret />
            </ToolButton>
          </Toolbar>

          <Viewport>
            <Page>
              <Column>
                <Topic $open>
                  <TopicSide />
                  <TopicBody $open>
                    <CutLine>
                      <svg width="10" height="4" viewBox="0 0 10 4" aria-hidden>
                        <path d="M2 0h8L6 4H3z" fill="#55595f" />
                      </svg>
                    </CutLine>
                    <LeadRow>
                      <LeadText>have finished.</LeadText>
                      <ActionBar items={["right", "move", "edit", "remove", "hide"]} />
                    </LeadRow>
                    <Rows>
                      <Row $indent>
                        <DocIcon />
                        <RowLink href="#">practice</RowLink>
                        <ActionBar items={["left", "right", "move", "edit", "remove", "hide"]} />
                      </Row>
                      <Row>
                        <DocIcon />
                        <RowLink href="#">Module one</RowLink>
                        <ActionBar items={["right", "move", "edit", "remove", "hide"]} />
                      </Row>
                    </Rows>
                    <AddControls />
                  </TopicBody>
                  <TopicSide />
                </Topic>

                <Topic>
                  <TopicSide>
                    <TopicNumber>3</TopicNumber>
                  </TopicSide>
                  <TopicBody>
                    <TopicEdit aria-label="Edit summary">
                      <EditIcon />
                    </TopicEdit>
                    <Rows>
                      <Row>
                        <DocIcon />
                        <RowLink href="#">Examination</RowLink>
                        <ActionBar items={["right", "move", "edit", "remove", "hide"]} />
                      </Row>
                    </Rows>
                    <AddControls />
                  </TopicBody>
                  <TopicSide>
                    <SideSlot $h={35} aria-label="Show only topic 3">
                      <SquareIcon />
                    </SideSlot>
                    <SideSlot $h={35} aria-label="Highlight topic 3">
                      <BulbIcon />
                    </SideSlot>
                    <SideSlot $h={32} aria-label="Hide topic 3">
                      <BigEyeIcon />
                    </SideSlot>
                    <SideSlot $h={27} aria-label="Move topic 3 up">
                      <UpIcon />
                    </SideSlot>
                    <SideSlot $h={27} aria-label="Move topic 3 down">
                      <DownIcon />
                    </SideSlot>
                  </TopicSide>
                </Topic>

                <Topic $current>
                  <TopicSide $current>
                    <TopicNumber>4</TopicNumber>
                  </TopicSide>
                  <TopicBody>
                    <TopicEdit aria-label="Edit summary">
                      <EditIcon />
                    </TopicEdit>
                    <Rows>
                      <Row>
                        <DocIcon />
                        <RowLink href="#" $dim>
                          readings on maternal physiology
                        </RowLink>
                        <ActionBar items={["right", "move", "edit", "remove", "show"]} />
                      </Row>
                    </Rows>
                    <AddControls />
                  </TopicBody>
                  <TopicSide $current>
                    <SideSlot $h={35} aria-label="Show only topic 4">
                      <SquareIcon />
                    </SideSlot>
                    <SideSlot $h={35} aria-label="Highlight topic 4">
                      <BulbIcon />
                    </SideSlot>
                    <SideSlot $h={32} $end aria-label="Show topic 4">
                      <BigEyeShutIcon />
                    </SideSlot>
                    <SideSlot $h={27} aria-label="Move topic 4 up">
                      <UpIcon />
                    </SideSlot>
                  </TopicSide>
                </Topic>

                <PageFooter>
                  <DocsLink href="#">
                    <CoinIcon mark="i" />
                    Moodle Docs for this page
                  </DocsLink>
                  <HomeButton href="#">Home</HomeButton>
                  <LoginLine>
                    You are logged in as <a href="#">Carolyn McIntosh</a> (<a href="#">Logout</a>)
                  </LoginLine>
                </PageFooter>
              </Column>
              <BlueBar />
            </Page>
            <ScrollBar>
              <ScrollButton aria-label="Scroll up">
                <svg width="16" height="9" viewBox="0 0 16 9" aria-hidden>
                  <path d="M0 9h16L8 0z" fill="#3c3c40" />
                </svg>
              </ScrollButton>
              <ScrollThumb aria-label="Scroll position">
                <Grip />
                <Grip />
                <Grip />
              </ScrollThumb>
              <ScrollButton aria-label="Scroll down">
                <svg width="16" height="9" viewBox="0 0 16 9" aria-hidden>
                  <path d="M0 0h16L8 9z" fill="#3c3c40" />
                </svg>
              </ScrollButton>
            </ScrollBar>
          </Viewport>

          <TaskBar>
            <TaskList>
              <Task aria-label="Internet Explorer"><IEIcon /></Task>
              <Task aria-label="Media Player"><MediaIcon /></Task>
              <Task aria-label="Messenger"><PersonIcon /></Task>
              <Task aria-label="Outlook"><OutlookIcon /></Task>
              <Task $open $front aria-label="Chrome"><ChromeIcon /></Task>
              <Task aria-label="Skype"><SkypeIcon /></Task>
              <Task aria-label="Firefox"><FirefoxIcon /></Task>
              <Task $open aria-label="PowerPoint"><PowerPointIcon /></Task>
              <Task $open aria-label="Firefox window"><FirefoxIcon /></Task>
            </TaskList>
            <Tray>
              <TrayButton aria-label="Show hidden icons">
                <svg width="40" height="12" viewBox="0 0 40 12" aria-hidden>
                  <path d="M8 11h20L18 1z" fill="#eef4fc" stroke="#6a7c96" strokeWidth="1" />
                </svg>
              </TrayButton>
              <TrayButton aria-label="Power">
                <svg width="36" height="38" viewBox="0 0 36 38" aria-hidden>
                  <path d="M15 4H9v3H4v28h18" fill="none" stroke="#3c4858" strokeWidth="6" />
                  <path d="M16 4H9v3H4v28h18v-8" fill="none" stroke="#fff" strokeWidth="3" />
                  <rect x="9" y="22" width="9" height="10" fill="#fff" />
                  <path d="M14 9h21v5h-3c0 8-3 11-6 12v12h-4V26c-4-2-6-5-6-12h-2z" fill="#fff" stroke="#3c4858" strokeWidth="2" />
                  <path d="M20 1v9M29 1v9" stroke="#fff" strokeWidth="3" />
                </svg>
              </TrayButton>
              <TrayButton aria-label="Volume muted">
                <svg width="38" height="36" viewBox="0 0 38 36" aria-hidden>
                  <path d="M1 11h5v14H1zM7 11L18 1v34L7 25z" fill="#fff" stroke="#56667c" strokeWidth="1" />
                  <circle cx="27" cy="25" r="9" fill="#f4c4b8" stroke="#d4202c" strokeWidth="4" />
                  <path d="M20 19l14 12" stroke="#d4202c" strokeWidth="4" />
                </svg>
              </TrayButton>
              <Clock>{"7:10 p.m.\n14/07/2010"}</Clock>
              <ShowDesktop aria-label="Show desktop" />
            </Tray>
          </TaskBar>
        </Window>

        <Swoosh />

        <Callout>
          <svg width="820" height="544" viewBox="0 0 820 544" aria-hidden>
            <clipPath id="bubbleClip">
              <path d={bubble} />
            </clipPath>
            <path d={bubble} fill="#2ea1c0" stroke="#217a94" strokeWidth="12" strokeLinejoin="round" />
            <g clipPath="url(#bubbleClip)" fill="none">
              <path d={bubble} stroke="#2ea1c0" strokeWidth="8" />
              <path d={bubble} stroke="#217a94" strokeWidth="3" />
            </g>
          </svg>
          <CalloutText>{"Choose\nadd a\nresource"}</CalloutText>
        </Callout>
      </Slide>
    </>
  );
}
